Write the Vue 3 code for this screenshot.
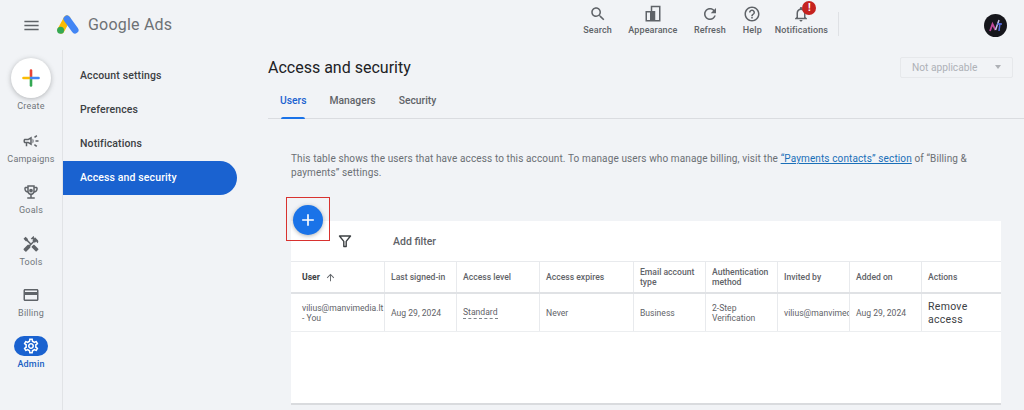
<script setup>
const topActions = [
  { label: 'Search', d: 'M15.5 14h-.79l-.28-.27C15.41 12.59 16 11.11 16 9.5 16 5.91 13.09 3 9.5 3S3 5.91 3 9.5 5.91 16 9.5 16c1.61 0 3.09-.59 4.23-1.57l.27.28v.79l5 4.99L20.49 19l-4.99-5zm-6 0C7.01 14 5 11.99 5 9.5S7.01 5 9.5 5 14 7.01 14 9.5 11.99 14 9.5 14z' },
  { label: 'Appearance', d: 'M9 1h13v21H2V8h7V1zm6 9v10h5V3h-9v5h4v2zM4 10v10h4V10H4z' },
  { label: 'Refresh', d: 'M17.65 6.35C16.2 4.9 14.21 4 12 4c-4.42 0-7.99 3.58-7.99 8s3.57 8 7.99 8c3.73 0 6.84-2.55 7.73-6h-2.08c-.82 2.33-3.04 4-5.65 4-3.31 0-6-2.69-6-6s2.69-6 6-6c1.66 0 3.14.69 4.22 1.78L13 11h7V4l-2.35 2.35z' },
  { label: 'Help', d: 'M11 18h2v-2h-2v2zm1-16C6.48 2 2 6.48 2 12s4.48 10 10 10 10-4.48 10-10S17.52 2 12 2zm0 18c-4.41 0-8-3.59-8-8s3.59-8 8-8 8 3.59 8 8-3.59 8-8 8zm0-14c-2.21 0-4 1.79-4 4h2c0-1.1.9-2 2-2s2 .9 2 2c0 2-3 1.75-3 5h2c0-2.25 3-2.5 3-5 0-2.21-1.79-4-4-4z' },
  { label: 'Notifications', badge: true, d: 'M12 22c1.1 0 2-.9 2-2h-4c0 1.1.9 2 2 2zm6-6v-5c0-3.07-1.63-5.64-4.5-6.32V4c0-.83-.67-1.5-1.5-1.5s-1.5.67-1.5 1.5v.68C7.64 5.36 6 7.92 6 11v5l-2 2v1h16v-1l-2-2zm-2 1H8v-6c0-2.48 1.51-4.5 4-4.5s4 2.02 4 4.5v6z' }
]
const railItems = [
  { label: 'Campaigns', d: 'M18 11v2h4v-2h-4zm-2 6.61c.96.71 2.21 1.65 3.2 2.4.4-.53.8-1.07 1.2-1.6-.99-.74-2.24-1.68-3.2-2.4-.4.53-.8 1.07-1.2 1.6zM20.4 5.6c-.4-.53-.8-1.07-1.2-1.6-.99.74-2.24 1.68-3.2 2.4.4.53.8 1.07 1.2 1.6.96-.72 2.21-1.65 3.2-2.4zM4 9c-1.1 0-2 .9-2 2v2c0 1.1.9 2 2 2h1v4h2v-4h1l5 3V6L8 9H4zm5.03 1.71L11 9.53v4.94l-1.97-1.18-.48-.29H4v-2h4.55l.48-.29zM15.5 12c0-1.33-.58-2.53-1.5-3.35v6.69c.92-.81 1.5-2.01 1.5-3.34z' },
  { label: 'Goals', d: 'M19 5h-2V3H7v2H5c-1.1 0-2 .9-2 2v1c0 2.55 1.92 4.63 4.39 4.94.63 1.5 1.98 2.63 3.61 2.96V19H7v2h10v-2h-4v-3.1c1.63-.33 2.98-1.46 3.61-2.96C19.08 12.63 21 10.55 21 8V7c0-1.1-.9-2-2-2zM5 8V7h2v3.82C5.84 10.4 5 9.3 5 8zm7 6c-1.65 0-3-1.35-3-3V5h6v6c0 1.65-1.35 3-3 3zm7-6c0 1.3-.84 2.4-2 2.82V7h2v1zM12 7.5a2.5 2.5 0 1 0 0 5 2.5 2.5 0 0 0 0-5z' },
  { label: 'Tools', d: 'M21.67 18.17l-5.3-5.3h-.99l-2.54 2.54v.99l5.3 5.3c.39.39 1.02.39 1.41 0l2.12-2.12c.39-.38.39-1.02 0-1.41zM17.34 10.19l1.41-1.41 2.12 2.12c1.17-1.17 1.17-3.07 0-4.24l-3.54-3.54-1.41 1.41V2.01l-.7-.71-3.54 3.54.71.71h2.83l-1.41 1.41 1.06 1.06-2.89 2.89-4.13-4.13V5.35L4.83 2.29 2 5.12l3.06 3.06h1.41l4.13 4.13-.85.85H7.64l-5.3 5.3c-.39.39-.39 1.02 0 1.41l2.12 2.12c.39.39 1.02.39 1.41 0l5.3-5.3v-2.12l5.15-5.15 1.02 1.77z' },
  { label: 'Billing', d: 'M20 4H4c-1.11 0-1.99.89-1.99 2L2 18c0 1.11.89 2 2 2h16c1.11 0 2-.89 2-2V6c0-1.11-.89-2-2-2zm0 14H4v-6h16v6zm0-10H4V6h16v2z' }
]
const gear = 'M19.43 12.98c.04-.32.07-.64.07-.98 0-.34-.03-.66-.07-.98l2.11-1.65c.19-.15.24-.42.12-.64l-2-3.46c-.09-.16-.26-.25-.44-.25-.06 0-.12.01-.17.03l-2.49 1c-.52-.4-1.08-.73-1.69-.98l-.38-2.65C14.46 2.18 14.25 2 14 2h-4c-.25 0-.46.18-.49.42l-.38 2.65c-.61.25-1.17.59-1.69.98l-2.49-1c-.06-.02-.12-.03-.18-.03-.17 0-.34.09-.43.25l-2 3.46c-.13.22-.07.49.12.64l2.11 1.65c-.04.32-.07.65-.07.98 0 .33.03.66.07.98l-2.11 1.65c-.19.15-.24.42-.12.64l2 3.46c.09.16.26.25.44.25.06 0 .12-.01.17-.03l2.49-1c.52.4 1.08.73 1.69.98l.38 2.65c.03.24.24.42.49.42h4c.25 0 .46-.18.49-.42l.38-2.65c.61-.25 1.17-.59 1.69-.98l2.49 1c.06.02.12.03.18.03.17 0 .34-.09.43-.25l2-3.46c.12-.22.07-.49-.12-.64l-2.11-1.65zm-1.98-1.71c.04.31.05.52.05.73 0 .21-.02.43-.05.73l-.14 1.13.89.7 1.08.84-.7 1.21-1.27-.51-1.04-.42-.9.68c-.43.32-.84.56-1.25.73l-1.06.43-.16 1.13-.2 1.35h-1.4l-.19-1.35-.16-1.13-1.06-.43c-.43-.18-.83-.41-1.23-.71l-.91-.7-1.06.43-1.27.51-.7-1.21 1.08-.84.89-.7-.14-1.13c-.03-.31-.05-.54-.05-.74s.02-.43.05-.73l.14-1.13-.89-.7-1.08-.84.7-1.21 1.27.51 1.04.42.9-.68c.43-.32.84-.56 1.25-.73l1.06-.43.16-1.13.2-1.35h1.39l.19 1.35.16 1.13 1.06.43c.43.18.83.41 1.23.71l.91.7 1.06-.43 1.27-.51.7 1.21-1.07.85-.89.7.14 1.13zM12 8c-2.21 0-4 1.79-4 4s1.79 4 4 4 4-1.79 4-4-1.79-4-4-4zm0 6c-1.1 0-2-.9-2-2s.9-2 2-2 2 .9 2 2-.9 2-2 2z'
const subNav = ['Account settings', 'Preferences', 'Notifications', 'Access and security']
const tabs = ['Users', 'Managers', 'Security']
const columns = ['Last signed-in', 'Access level', 'Access expires', 'Email account type', 'Authentication method', 'Invited by', 'Added on', 'Actions']
</script>

<template>
  <div class="page">
    <header class="topbar">
      <div class="menu-slot">
        <svg class="menu" viewBox="0 0 24 24"><path d="M3 18h18v-2H3v2zm0-5h18v-2H3v2zm0-7v2h18V6H3z" /></svg>
      </div>
      <svg class="logo" viewBox="0 0 22 19">
        <line x1="10" y1="4" x2="4" y2="15" stroke="#fbbc04" stroke-width="7" stroke-linecap="round" />
        <line x1="10" y1="4" x2="18" y2="15" stroke="#4285f4" stroke-width="7" stroke-linecap="round" />
        <circle cx="3.6" cy="15.2" r="3.5" fill="#34a853" />
      </svg>
      <span class="brand">Google Ads</span>
      <nav class="actions">
        <div v-for="a in topActions" :key="a.label" class="action">
          <span class="action-icon">
            <svg viewBox="0 0 24 24"><path :d="a.d" /></svg>
            <span v-if="a.badge" class="badge">!</span>
          </span>
          <span class="action-label">{{ a.label }}</span>
        </div>
      </nav>
      <span class="divider"></span>
      <svg class="avatar" viewBox="0 0 23 23">
        <circle cx="11.5" cy="11.5" r="11.5" fill="#16161c" />
        <path d="M6 17l2.5-7 3 6" fill="none" stroke="#c04a9a" stroke-width="1.8" />
        <path d="M11.5 16l3.5-10" fill="none" stroke="#c9c4e8" stroke-width="1.5" />
        <path d="M15 17l1-8M13 10h5" fill="none" stroke="#5a6fe0" stroke-width="1.5" />
      </svg>
    </header>

    <div class="body">
      <aside class="rail">
        <div class="create">
          <span class="create-btn">
            <svg viewBox="0 0 20 20">
              <path d="M10 10V2.5" stroke="#ea4335" />
              <path d="M10 10v7.5" stroke="#34a853" />
              <path d="M10 10H2.5" stroke="#fbbc04" />
              <path d="M10 10h7.5" stroke="#4285f4" />
            </svg>
          </span>
          <span class="rail-label">Create</span>
        </div>
        <div v-for="r in railItems" :key="r.label" class="rail-item">
          <span class="rail-icon"><svg viewBox="0 0 24 24"><path :d="r.d" /></svg></span>
          <span class="rail-label">{{ r.label }}</span>
        </div>
        <div class="rail-item active">
          <span class="rail-icon pill"><svg viewBox="0 0 24 24"><path :d="gear" /></svg></span>
          <span class="rail-label">Admin</span>
        </div>
      </aside>

      <nav class="subnav">
        <div
          v-for="(s, i) in subNav"
          :key="s"
          class="subnav-item"
          :class="{ current: i === 3 }"
        >{{ s }}</div>
      </nav>

      <main class="main">
        <div class="title-row">
          <h1 class="title">Access and security</h1>
          <div class="select">
            <span>Not applicable</span>
            <i class="caret"></i>
          </div>
        </div>
        <div class="tabs">
          <span v-for="(t, i) in tabs" :key="t" class="tab" :class="{ on: i === 0 }">{{ t }}</span>
        </div>
        <p class="desc">
          This table shows the users that have access to this account. To manage users who manage billing, visit the
          <a class="link">“Payments contacts” section</a> of “Billing &amp;<br />payments” settings.
        </p>
        <section class="card">
          <div class="fab-mark"></div>
          <button class="fab">
            <svg viewBox="0 0 24 24"><path d="M19 13h-6v6h-2v-6H5v-2h6V5h2v6h6v2z" /></svg>
          </button>
          <div class="filter-row">
            <svg class="funnel" viewBox="0 0 14 14"><path d="M1.5 2h11L8.2 7.4V12.5H5.8V7.4z" fill="none" stroke="#3c4043" stroke-width="1.4" stroke-linejoin="round" /></svg>
            <span class="add-filter">Add filter</span>
          </div>
          <div class="grid head">
            <div class="cell first strong">
              User
              <svg class="sort" viewBox="0 0 24 24"><path d="M4 12l1.41 1.41L11 7.83V20h2V7.83l5.58 5.59L20 12l-8-8-8 8z" /></svg>
            </div>
            <div v-for="c in columns" :key="c" class="cell">{{ c }}</div>
          </div>
          <div class="grid row">
            <div class="cell first"><span>vilius@manvimedia.lt<br />- You</span></div>
            <div class="cell">Aug 29, 2024</div>
            <div class="cell"><span class="dashed">Standard</span></div>
            <div class="cell">Never</div>
            <div class="cell">Business</div>
            <div class="cell">2-Step Verification</div>
            <div class="cell clip">vilius@manvimedia.lt</div>
            <div class="cell">Aug 29, 2024</div>
            <div class="cell remove">Remove access</div>
          </div>
        </section>
      </main>
    </div>
  </div>
</template>

<style>
html, body { margin: 0; background: #f1f3f6; overflow: hidden; }
</style>

<style scoped>
.page {
  width: 1024px;
  height: 410px;
  overflow: hidden;
  background: #f1f3f6;
  font-family: Roboto, "Liberation Sans", sans-serif;
  color: #3c4043;
  display: flex;
  flex-direction: column;
}
.topbar {
  height: 50px;
  flex: none;
  display: flex;
  align-items: center;
}
.menu-slot { width: 57px; flex: none; display: flex; padding-left: 22px; box-sizing: border-box; }
.menu { width: 19px; height: 19px; fill: #5f6368; }
.logo { width: 22px; height: 19px; margin-top: -2px; flex: none; }
.brand {
  margin: -1px auto 0 9px;
  font-size: 16px;
  letter-spacing: 0.2px;
  color: #6d7175;
}
.actions { display: flex; gap: 16.5px; align-self: flex-start; }
.action { display: flex; flex-direction: column; align-items: center; }
.action:nth-child(4) { margin-right: -4px; }
.action-icon {
  position: relative;
  width: 20px;
  height: 20px;
  margin-top: 4px;
  display: flex;
  align-items: center;
  justify-content: center;
}
.action-icon svg { width: 18px; height: 18px; fill: #5f6368; display: block; }
.badge {
  position: absolute;
  left: 11px;
  top: -3px;
  width: 14px;
  height: 14px;
  border-radius: 50%;
  background: #c5221f;
  color: #fff;
  font-size: 10px;
  font-weight: 700;
  line-height: 14px;
  text-align: center;
}
.action-label { font-size: 9px; font-weight: 500; letter-spacing: 0.1px; color: #5f6368; line-height: 12px; }
.divider { width: 1px; height: 24px; background: #dfe1e5; margin-left: 10px; margin-top: -2px; }
.avatar { width: 23px; height: 23px; margin: 1px 17px 0 145px; flex: none; }

.body { flex: 1; display: flex; min-height: 0; }
.rail {
  width: 63px;
  flex: none;
  box-sizing: border-box;
  border-right: 1px solid #e1e3e6;
  padding-top: 8px;
  display: flex;
  flex-direction: column;
  align-items: center;
  gap: 17.25px;
}
.create { display: flex; flex-direction: column; align-items: center; gap: 2px; margin-bottom: 1.75px; }
.create-btn {
  width: 40px;
  height: 40px;
  border-radius: 50%;
  background: #fff;
  box-shadow: 0 1px 5px rgba(60, 64, 67, 0.35);
  display: flex;
  align-items: center;
  justify-content: center;
}
.create-btn svg { width: 20px; height: 20px; fill: none; stroke-width: 2.6; stroke-linecap: round; }
.rail-item { display: flex; flex-direction: column; align-items: center; gap: 2px; }
.rail-icon { width: 20px; height: 20px; display: flex; align-items: center; justify-content: center; }
.rail-icon svg { width: 18px; height: 18px; fill: #5f6368; display: block; }
.rail-label { font-size: 9px; line-height: 12px; letter-spacing: 0.2px; color: #70757a; }
.rail-icon.pill { width: 34px; border-radius: 10px; background: #1a62d0; }
.rail-icon.pill svg { fill: #fff; }
.active .rail-label { color: #1a5fc4; font-weight: 500; }

.subnav { width: 174px; flex: none; padding-top: 9px; }
.subnav-item {
  height: 34px;
  line-height: 34px;
  padding-left: 17px;
  font-size: 10.5px;
  font-weight: 500;
  letter-spacing: 0.12px;
  color: #3c4043;
}
.subnav-item.current {
  background: #1a62d0;
  color: #fff;
  border-radius: 0 17px 17px 0;
}

.main { flex: 1; min-width: 0; margin-left: 31px; }
.title-row { height: 34px; display: flex; align-items: center; justify-content: space-between; padding-right: 11px; }
.title { margin: 0; font-size: 16px; font-weight: 400; color: #202124; }
.select {
  width: 113px;
  height: 21px;
  box-sizing: border-box;
  border: 1px solid #e6e8eb;
  border-radius: 2px;
  display: flex;
  align-items: center;
  justify-content: space-between;
  padding: 0 11px;
  font-size: 10.2px;
  color: #aeb1b6;
}
.caret { width: 0; height: 0; border: 3.5px solid transparent; border-top: 4px solid #aeb1b6; border-bottom: 0; }
.tabs {
  height: 35px;
  box-sizing: border-box;
  border-bottom: 1px solid #dadce0;
  display: flex;
  gap: 23px;
  padding-left: 12px;
}
.tab {
  font-size: 10.3px;
  font-weight: 500;
  color: #5f6368;
  line-height: 34px;
  height: 34px;
  box-sizing: border-box;
  position: relative;
}
.tab.on { color: #1a62d0; }
.tab.on::after {
  content: "";
  position: absolute;
  left: 1px;
  right: 2px;
  bottom: -1px;
  height: 2px;
  border-radius: 2px 2px 0 0;
  background: #1a73e8;
}
.desc {
  margin: 33px 0 0 23px;
  width: 700px;
  font-size: 10px;
  line-height: 14px;
  letter-spacing: 0.12px;
  color: #6b6f74;
}
.link { color: #1a6fb8; text-decoration: underline; }
.card {
  position: relative;
  margin: 41px 23px 0;
  height: 184px;
  box-sizing: border-box;
  background: #fff;
  border-bottom: 2px solid #d9dbde;
}
.fab-mark {
  position: absolute;
  left: -5px;
  top: -24px;
  width: 44px;
  height: 44px;
  box-sizing: border-box;
  border: 1.5px solid #d8322f;
}
.fab {
  position: absolute;
  left: 2px;
  top: -16px;
  width: 30px;
  height: 30px;
  padding: 0;
  border: 0;
  border-radius: 50%;
  background: #1a73e8;
  box-shadow: 0 1px 4px rgba(60, 64, 67, 0.4);
  display: flex;
  align-items: center;
  justify-content: center;
}
.fab svg { width: 20px; height: 20px; fill: #fff; }
.filter-row { height: 40px; display: flex; align-items: center; padding-left: 47px; }
.funnel { width: 14px; height: 14px; }
.add-filter { margin-left: 41px; font-size: 10.5px; font-weight: 500; color: #5f6368; }
.grid {
  display: grid;
  grid-template-columns: 94px 72px 83px 94px 72px 72px 72px 72px 79px;
}
.head { height: 33px; box-sizing: border-box; border-top: 1px solid #e8eaed; border-bottom: 2px solid #e0e2e5; }
.row { height: 38px; box-sizing: border-box; border-bottom: 1px solid #eceef0; }
.cell {
  display: flex;
  align-items: center;
  box-sizing: border-box;
  padding: 0 6px;
  font-size: 8.6px;
  line-height: 10px;
  color: #5f6368;
  border-right: 1px solid #e8eaed;
  overflow: hidden;
}
.cell:last-child { border-right: 0; }
.head .cell { font-weight: 500; }
.cell.first { padding: 0 0 0 11px; white-space: nowrap; }
.head .cell.strong { font-weight: 700; color: #3c4043; }
.sort { width: 11px; height: 11px; fill: #5f6368; margin-left: 5px; }
.clip { white-space: nowrap; padding-right: 0; }
.dashed { border-bottom: 1px dashed #80868b; padding-bottom: 1px; }
.cell.remove { font-size: 10.5px; line-height: 13px; color: #3c4043; letter-spacing: 0.3px; }
</style>
